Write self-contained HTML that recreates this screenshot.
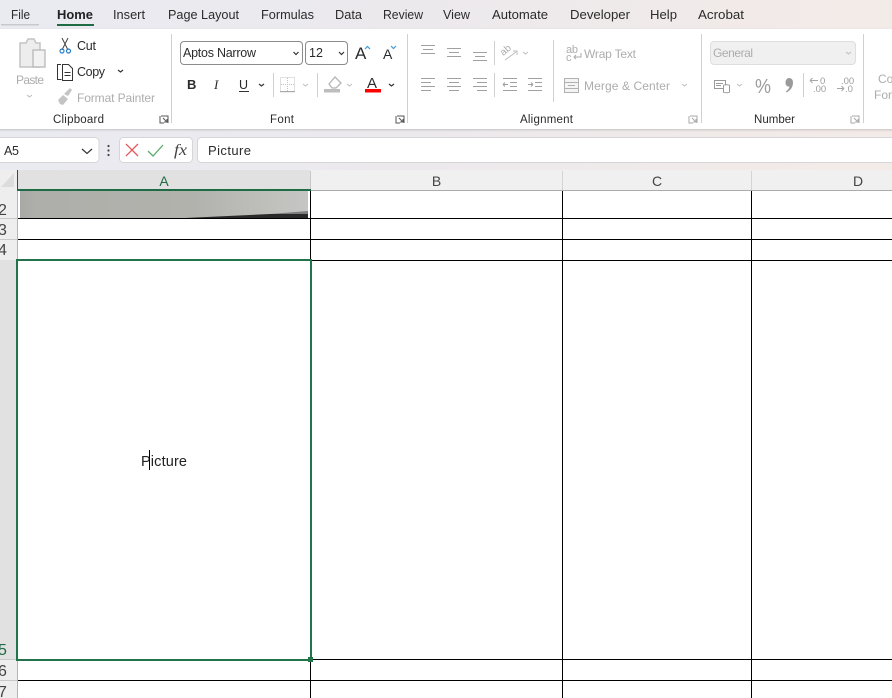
<!DOCTYPE html>
<html><head><meta charset="utf-8"><style>
html,body{margin:0;padding:0;width:892px;height:698px;overflow:hidden;background:#fff}
svg{display:block}
text{font-family:"Liberation Sans",sans-serif;font-size:12px;fill:#2b2b2b}
.t{font-size:13px;fill:#2b2b2b}
.g{fill:#adadad;font-size:11.5px}
.l{font-size:11.5px;fill:#2b2b2b}
.d{fill:none;stroke:#333;stroke-width:1.2}
.dg{fill:none;stroke:#bdbdbd;stroke-width:1}
.a{stroke:#a0a0a0;stroke-width:1;fill:none}
.s{stroke:#d0d0d0;stroke-width:1}
.k{stroke:#000;stroke-width:1;shape-rendering:crispEdges}
.h{font-size:14px;fill:#444}
.r{font-size:16px;fill:#444}
.n{font-size:9.5px;fill:#9c9c9c}
</style></head><body>
<svg width="892" height="698" viewBox="0 0 892 698" xmlns="http://www.w3.org/2000/svg">
<defs>
<linearGradient id="bg" x1="0" x2="1" y1="0" y2="0"><stop offset="0" stop-color="#e9ebf1"/><stop offset="0.45" stop-color="#ece9ed"/><stop offset="1" stop-color="#f3ebe7"/></linearGradient>
<linearGradient id="pic" x1="0" x2="1" y1="0" y2="0"><stop offset="0" stop-color="#a8a8a4"/><stop offset="0.05" stop-color="#aeaeaa"/><stop offset="0.6" stop-color="#b2b2ad"/><stop offset="0.85" stop-color="#bebfbb"/><stop offset="1" stop-color="#c6c7c4"/></linearGradient>
<filter id="sh" x="-2%" y="-10%" width="104%" height="120%"><feDropShadow dx="0" dy="1" stdDeviation="1" flood-color="#000" flood-opacity=".18"/></filter>
</defs>
<rect width="892" height="170" fill="url(#bg)"/>

<!-- tabs -->
<text class="t" x="11" y="19" textLength="19" lengthAdjust="spacingAndGlyphs">File</text>
<text class="t" x="57" y="19" textLength="36" lengthAdjust="spacingAndGlyphs" style="font-weight:bold;fill:#222">Home</text>
<text class="t" x="113" y="19" textLength="32" lengthAdjust="spacingAndGlyphs">Insert</text>
<text class="t" x="168" y="19" textLength="71" lengthAdjust="spacingAndGlyphs">Page Layout</text>
<text class="t" x="261" y="19" textLength="53" lengthAdjust="spacingAndGlyphs">Formulas</text>
<text class="t" x="335" y="19" textLength="27" lengthAdjust="spacingAndGlyphs">Data</text>
<text class="t" x="383" y="19" textLength="40" lengthAdjust="spacingAndGlyphs">Review</text>
<text class="t" x="443" y="19" textLength="27" lengthAdjust="spacingAndGlyphs">View</text>
<text class="t" x="492" y="19" textLength="56" lengthAdjust="spacingAndGlyphs">Automate</text>
<text class="t" x="570" y="19" textLength="60" lengthAdjust="spacingAndGlyphs">Developer</text>
<text class="t" x="650" y="19" textLength="27" lengthAdjust="spacingAndGlyphs">Help</text>
<text class="t" x="698" y="19" textLength="46" lengthAdjust="spacingAndGlyphs">Acrobat</text>
<rect x="1" y="24" width="38" height="1.5" fill="#c8c9cc"/>
<rect x="57" y="24" width="37" height="2" fill="#1e6b45"/>

<!-- ribbon -->
<rect x="-10" y="29" width="912" height="100" rx="6" fill="#fff" filter="url(#sh)"/>

<!-- separators -->
<g class="s">
<line x1="171.5" y1="34" x2="171.5" y2="123"/>
<line x1="407.5" y1="34" x2="407.5" y2="123"/>
<line x1="701.5" y1="34" x2="701.5" y2="123"/>
<line x1="863.5" y1="34" x2="863.5" y2="123"/>
<line x1="553.5" y1="40" x2="553.5" y2="102"/>
<line x1="273.5" y1="73" x2="273.5" y2="97"/>
<line x1="317.5" y1="73" x2="317.5" y2="97"/>
<line x1="494.5" y1="41" x2="494.5" y2="65"/>
<line x1="494.5" y1="73" x2="494.5" y2="97"/>
<line x1="803.5" y1="73" x2="803.5" y2="97"/>
</g>

<!-- clipboard -->
<path d="M20 43h6l2-4h6l2 4h4v24H20z" fill="#ededed" stroke="#c4c4c4" stroke-width="1.5"/>
<rect x="33" y="50" width="12" height="17" fill="#f2f2f2" stroke="#b8b8b8" stroke-width="1.3"/>
<text class="g" x="16" y="84" textLength="28" style="font-size:12px">Paste</text>
<path class="dg" d="M27 95l2.500 2 2.500-2"/>
<path d="M62 38l6 12M68 38l-6 12" stroke="#444" stroke-width="1" fill="none"/>
<circle cx="62" cy="51" r="2" fill="none" stroke="#2a7fc9" stroke-width="1.2"/>
<circle cx="68.5" cy="51" r="2" fill="none" stroke="#2a7fc9" stroke-width="1.2"/>
<text x="77" y="50" textLength="19" style="font-size:12.5px">Cut</text>
<path d="M61 64.500h-3.500v15h4M62.500 64.500h6l4 4v12h-10z" fill="none" stroke="#333" stroke-width="1"/>
<path d="M64.500 72.500h6M64.500 75.500h6" stroke="#333" stroke-width="1"/>
<text x="77" y="76" textLength="28" style="font-size:12.5px">Copy</text>
<path class="d" d="M118 70l2.500 2 2.500-2"/>
<path d="M58 100l5-5 5 4-5 6-3-1zM64 94l6-6 2 2-4 6z" fill="#c4c4c4"/>
<text class="g" x="77" y="102" textLength="78" style="font-size:12px">Format Painter</text>
<text class="l" x="53" y="123" textLength="51">Clipboard</text>
<path d="M161 116h7v7M160 116v7h4M163 118l4 4M167 119v3h-3" fill="none" stroke="#555" stroke-width="1"/>

<!-- font -->
<rect x="180.5" y="41.5" width="122" height="23" rx="3.500" fill="#fff" stroke="#8c8c8c"/>
<text x="183" y="57" textLength="73" style="font-size:12.5px">Aptos Narrow</text>
<path class="d" d="M293.500 52l2.500 2.500 2.500-2.500"/>
<rect x="305.5" y="41.500" width="42" height="23" rx="3.500" fill="#fff" stroke="#8c8c8c"/>
<text x="309" y="57" style="font-size:12.5px">12</text>
<path class="d" d="M339 52l2.500 2.500 2.500-2.500"/>
<text x="355" y="59" style="font-size:17px">A</text>
<path d="M365 49l2.500-2.500 2.500 2.500" fill="none" stroke="#3c9ad6" stroke-width="1.2"/>
<text x="383" y="59" style="font-size:14px">A</text>
<path d="M391 46l2.500 2.500 2.500-2.500" fill="none" stroke="#3c9ad6" stroke-width="1.2"/>
<text x="187" y="89" style="font-weight:bold;font-size:13px">B</text>
<text x="214" y="89" style="font-size:13px;font-style:italic;font-family:'Liberation Serif',serif">I</text>
<text x="239" y="89" style="font-size:12.5px">U</text>
<rect x="239" y="91" width="10" height="1" fill="#333"/>
<path class="d" d="M259 84l2.500 2 2.500-2"/>
<rect x="280.5" y="77.500" width="14" height="14" fill="none" stroke="#c2c2c2" stroke-dasharray="1 1"/>
<path d="M287.500 78v14M281 84.500h14" stroke="#c2c2c2" stroke-dasharray="1 1"/>
<rect x="280" y="91" width="15" height="1.2" fill="#aaa"/>
<path class="dg" d="M303 84l2.500 2 2.500-2"/>
<path d="M329 84l6-7 6 6-5 5h-4z" fill="none" stroke="#b5b5b5" stroke-width="1.3"/>
<rect x="324" y="89" width="16" height="3.500" fill="#bdbdbd"/>
<path class="dg" d="M347 84l2.500 2 2.500-2"/>
<text x="367" y="88" style="font-size:15px">A</text>
<rect x="365" y="89" width="16" height="3.500" fill="#f00"/>
<path class="d" d="M389 84l2.500 2 2.500-2"/>
<text class="l" x="270" y="123" textLength="24">Font</text>
<path d="M397 116h7v7M396 116v7h4M399 118l4 4M403 119v3h-3" fill="none" stroke="#555" stroke-width="1"/>

<!-- alignment -->
<g class="a">
<path d="M421 45.500h14M423 49.500h10M421 53.500h14"/>
<path d="M447 48.500h14M449 52.500h10M447 56.500h14"/>
<path d="M473 52.500h14M475 56.500h10M473 60.500h14"/>
<path d="M421 78.500h14M421 82.500h10M421 86.500h14M421 90.500h10"/>
<path d="M447 78.500h14M449 82.500h10M447 86.500h14M449 90.500h10"/>
<path d="M473 78.500h14M477 82.500h10M473 86.500h14M477 90.500h10"/>
<path d="M503 78.500h14M510 82.500h7M510 86.500h7M503 90.500h14M503 84.500h5M503 84.500l2-2M503 84.500l2 2"/>
<path d="M528 78.500h14M535 82.500h7M535 86.500h7M528 90.500h14M528 84.500h5M533 84.500l-2-2M533 84.500l-2 2"/>
</g>
<text class="g" x="501" y="54" style="font-size:10px" transform="rotate(-40 505 52)">ab</text>
<path d="M505 60l11-8M513 51h4v4" fill="none" stroke="#bdbdbd"/>
<path class="dg" d="M523 52l2.500 2 2.500-2"/>
<text class="g" x="566" y="53" style="font-size:11px" textLength="12">ab</text>
<text class="g" x="566" y="61" style="font-size:11px">c</text>
<path d="M581 53v4h-7M576 55l-2 2 2 2" fill="none" stroke="#aaa"/>
<text class="g" x="584" y="58" textLength="52" style="font-size:12px">Wrap Text</text>
<rect x="564.5" y="78.500" width="14" height="14" fill="#f4f4f4" stroke="#b0b0b0"/>
<path d="M565 82.500h13M565 88.500h13M568 85.500h7" stroke="#b0b0b0"/>
<text class="g" x="584" y="90" textLength="86" style="font-size:12px">Merge &amp; Center</text>
<path class="dg" d="M682 84l2.500 2 2.500-2"/>
<text class="l" x="520" y="123" textLength="53">Alignment</text>
<path d="M690 116h7v7M689 116v7h4M692 118l4 4M696 119v3h-3" fill="none" stroke="#aaa" stroke-width="1"/>

<!-- number -->
<rect x="710.5" y="41.500" width="145" height="23" rx="3.500" fill="#f0f0f0" stroke="#dedede"/>
<text class="g" x="713" y="57" textLength="40" style="font-size:12px">General</text>
<path class="dg" d="M846 52l2.500 2 2.500-2"/>
<rect x="714.5" y="80.500" width="11" height="8" fill="none" stroke="#999"/>
<path d="M716 83.500h7M716 85.500h5" stroke="#999"/>
<path d="M723.500 85.500v6.500c0 1 6 1 6 0v-6.500c0-1-6-1-6 0z" fill="#fff" stroke="#999"/>
<path class="dg" d="M737 84l2.500 2 2.500-2"/>
<text x="755" y="93" style="font-size:20px;fill:#9c9c9c" textLength="16" lengthAdjust="spacingAndGlyphs">%</text>
<path d="M789 78c2.600 0 4 1.800 4 4.500 0 4.500-2.500 8-6.500 10l-.7-1c2-1.300 3.400-3 3.700-5-2.300.3-4-1.200-4-3.800 0-2.700 1.700-4.700 3.500-4.700z" fill="#9a9a9a"/>
<text class="n" x="820" y="84">0</text>
<text class="n" x="813" y="92">.00</text>
<path d="M810 80.500h8M810 80.500l2.500-2.500M810 80.500l2.500 2.500" stroke="#a6a6a6" fill="none"/>
<text class="n" x="841" y="84">.00</text>
<text class="n" x="845" y="92">.0</text>
<path d="M837 88.500h7M844 88.500l-2.500-2.500M844 88.500l-2.500 2.500" stroke="#a6a6a6" fill="none"/>
<text class="l" x="754" y="123" textLength="41">Number</text>
<path d="M852 116h7v7M851 116v7h4M854 118l4 4M858 119v3h-3" fill="none" stroke="#aaa" stroke-width="1"/>
<text class="g" x="878" y="83" style="font-size:12px">Co</text>
<text class="g" x="874" y="99" style="font-size:12px">For</text>

<!-- formula bar -->
<rect x="-5" y="137.500" width="104" height="25" rx="4" fill="#fff" stroke="#d6d6d8"/>
<text x="4" y="155" textLength="15" style="font-size:12.5px">A5</text>
<path class="d" d="M82 149l5 4.500 5-4.500"/>
<circle cx="108.500" cy="146" r="1.100" fill="#444"/><circle cx="108.500" cy="150.500" r="1.100" fill="#444"/><circle cx="108.500" cy="155" r="1.100" fill="#444"/>
<rect x="119.5" y="137.500" width="73" height="25" rx="4" fill="#fff" stroke="#d6d6d8"/>
<path d="M126 144l12 12M138 144l-12 12" stroke="#e8555b" stroke-width="1.3" fill="none"/>
<path d="M148 151l5 5 10-11" stroke="#5cab6d" stroke-width="1.3" fill="none"/>
<text x="174" y="155" textLength="13" lengthAdjust="spacingAndGlyphs" style="font-family:'Liberation Serif',serif;font-style:italic;font-size:16px;fill:#444">fx</text>
<rect x="197.5" y="137.500" width="710" height="25" rx="4" fill="#fff" stroke="#d6d6d8"/>
<text x="208" y="155" textLength="43" style="font-size:13px">Picture</text>

<!-- col headers -->
<rect y="170" width="892" height="20" fill="#f0f0f0"/>
<rect x="0" y="170" width="17" height="528" fill="#eeeeee"/>
<path d="M14 173v14H1z" fill="#dcdcdc"/>
<rect x="17" y="170" width="293" height="20" fill="#e1e1e1"/>
<rect x="310" y="190" width="582" height="1" fill="#ababab"/>
<rect x="310" y="171" width="1" height="19" fill="#c8c8c8"/>
<rect x="562" y="171" width="1" height="19" fill="#d4d4d4"/>
<rect x="751" y="171" width="1" height="19" fill="#d4d4d4"/>
<rect x="17" y="170" width="1" height="20" fill="#444"/>
<text class="h" x="164" y="186" text-anchor="middle" style="fill:#1e6b45">A</text>
<text class="h" x="436.500" y="186" text-anchor="middle">B</text>
<text class="h" x="657" y="186" text-anchor="middle">C</text>
<text class="h" x="858" y="186" text-anchor="middle">D</text>

<!-- row headers -->
<rect x="0" y="260" width="17" height="399" fill="#e1e1e1"/>
<path d="M0 218.500h17M0 239.500h17M0 659.500h17M0 680.500h17" stroke="#c8c8c8"/>
<rect x="17" y="190" width="1" height="508" fill="#b5b5b5"/>
<text class="r" x="-2" y="215">2</text>
<text class="r" x="-2" y="235">3</text>
<text class="r" x="-2" y="255">4</text>
<text class="r" x="-2" y="655" style="fill:#1e6b45">5</text>
<text class="r" x="-2" y="676">6</text>
<text class="r" x="-2" y="697">7</text>

<!-- grid -->
<rect x="18" y="191" width="874" height="507" fill="#fff"/>
<rect x="20" y="191" width="288" height="27" fill="url(#pic)"/>
<path d="M185 218l85-4v4z" fill="#2a2a2a"/>
<path d="M270 214l38-3v3z" fill="#7d7d7b"/>
<rect x="270" y="214" width="38" height="4" fill="#2a2a2a"/>
<g class="k">
<line x1="18" y1="218.500" x2="892" y2="218.500"/>
<line x1="18" y1="239.500" x2="892" y2="239.500"/>
<line x1="311" y1="260.500" x2="892" y2="260.500"/>
<line x1="311" y1="659.500" x2="892" y2="659.500"/>
<line x1="18" y1="680.500" x2="892" y2="680.500"/>
<line x1="310.500" y1="191" x2="310.500" y2="698"/>
<line x1="562.500" y1="191" x2="562.500" y2="698"/>
<line x1="751.500" y1="191" x2="751.500" y2="698"/>
</g>
<rect x="17" y="189" width="294" height="2" fill="#1e6b45"/>
<rect x="17" y="260" width="294" height="400" fill="#fff" stroke="#21734a" stroke-width="2"/>
<rect x="308" y="657" width="5" height="5" fill="#21734a"/>
<text x="141" y="466" textLength="46" style="font-size:14.5px;fill:#222">Picture</text>
<rect x="149" y="450" width="1" height="20" fill="#000"/>
</svg>
</body></html>
